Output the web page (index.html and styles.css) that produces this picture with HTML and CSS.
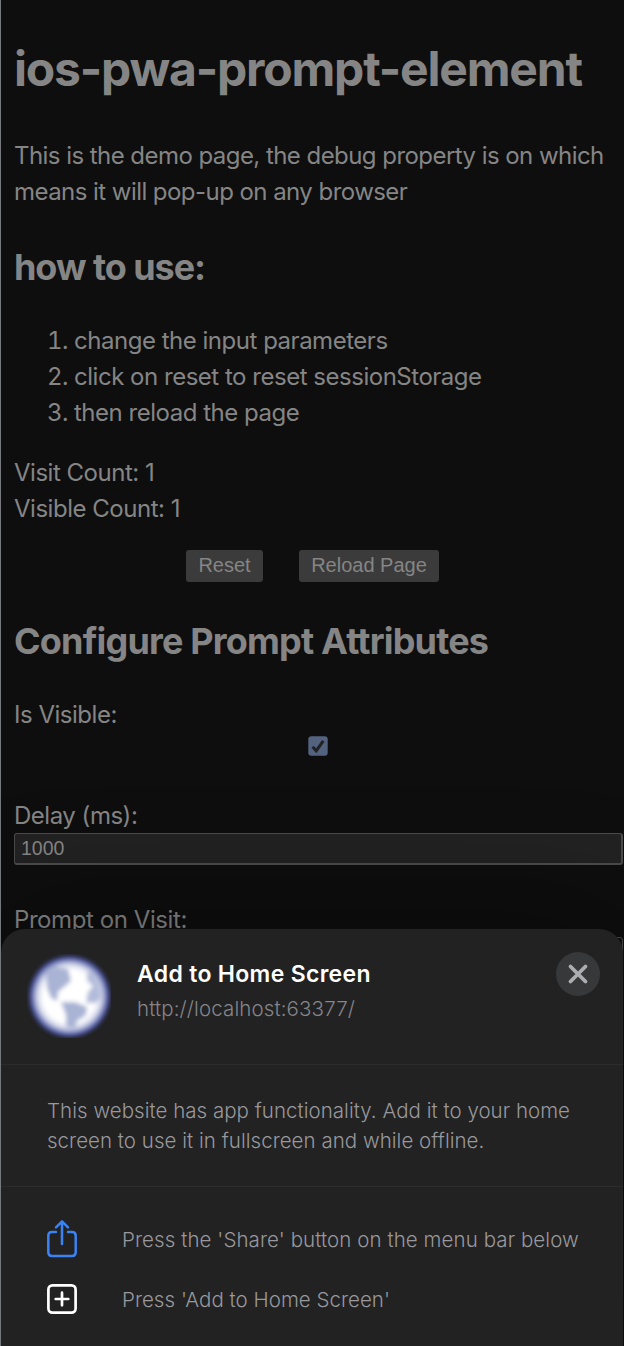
FILE: index.html
```html
<!DOCTYPE html>
<html lang="en">
<head>
<meta charset="utf-8">
<title>ios-pwa-prompt-element</title>
<link rel="stylesheet" href="styles.css">
</head>
<body>
<main class="page">
  <h1 class="title">ios-pwa-prompt-element</h1>
  <p class="intro">This is the demo page, the debug property is on which<br>means it will pop-up on any browser</p>
  <h2 class="heading how">how to use:</h2>
  <ol class="steps">
    <li>change the input parameters</li>
    <li>click on reset to reset sessionStorage</li>
    <li>then reload the page</li>
  </ol>
  <div class="counts">Visit Count: 1<br>Visible Count: 1</div>
  <div class="buttons"><button class="btn reset">Reset</button><button class="btn reload">Reload Page</button></div>
  <h2 class="heading configure">Configure Prompt Attributes</h2>
  <label class="label">Is Visible:</label>
  <div class="check-row"><svg class="check" width="20" height="20" viewBox="0 0 20 20"><rect x=".3" y=".3" width="19.4" height="19.4" rx="3" fill="#53637f"/><path d="M4.6 10.8 8.2 14.8 15.3 4.8" fill="none" stroke="#202224" stroke-width="3"/></svg></div>
  <label class="label delay">Delay (ms):</label>
  <div class="input">1000</div>
  <label class="label visit">Prompt on Visit:</label>
</main>
<div class="next-input"></div>
<section class="sheet">
  <header class="sheet-head">
    <svg class="globe" width="84" height="84" viewBox="0 0 84 84">
      <defs>
        <filter id="soft" x="-10%" y="-10%" width="120%" height="120%"><feGaussianBlur stdDeviation="2.1"/></filter>
        <radialGradient id="sea"><stop offset=".66" stop-color="#fff"/><stop offset=".8" stop-color="#cfd4e8"/><stop offset=".88" stop-color="#7d87be"/><stop offset=".95" stop-color="#4650a0"/><stop offset="1" stop-color="#3c4591"/></radialGradient>
      </defs>
      <g filter="url(#soft)">
        <circle cx="42.5" cy="42.5" r="40.5" fill="url(#sea)"/>
        <path d="M19 19 27 13 41 15 44 27 37 33 31 38 30 47 24 44 20 34Z" fill="#a9b3d4"/>
        <path d="M34 48H48L60 53 59 61 50 67 48 74 39 73 39 61Z" fill="#a9b3d4"/>
        <path d="M60 18 66 19 72 31 74 43 69 49 59 49 61 38 66 32 60 27Z" fill="#b3bcda"/>
      </g>
    </svg>
    <div class="app">
      <div class="app-name">Add to Home Screen</div>
      <div class="app-url">http://localhost:63377/</div>
    </div>
    <svg class="close" width="44" height="44" viewBox="0 0 44 44"><circle cx="22" cy="22" r="22" fill="#37383a"/><path d="M14.5 14.5 29.5 29.5M29.5 14.5 14.5 29.5" stroke="#acadb0" stroke-width="3.8" stroke-linecap="round"/></svg>
  </header>
  <div class="description">This website has app functionality. Add it to your home<br>screen to use it in fullscreen and while offline.</div>
  <div class="actions">
    <div class="action">
      <svg class="action-icon" width="32" height="40" viewBox="0 0 32 40" fill="none" stroke="#3b82f5" stroke-width="2.5" stroke-linecap="round" stroke-linejoin="round"><path d="M10 13H6Q2.3 13 2.3 16.7V33.2Q2.3 36.9 6 36.9H26Q29.7 36.9 29.7 33.2V16.7Q29.7 13 26 13H22"/><path d="M16 25V2.5M10 8.3 16 2.3 22 8.3"/></svg>
      <span class="share-text">Press the 'Share' button on the menu bar below</span>
    </div>
    <div class="action">
      <svg class="action-icon" width="32" height="32" viewBox="0 0 32 32" fill="none" stroke="#fff" stroke-width="2.7" stroke-linecap="round"><rect x="2.4" y="2.4" width="27.2" height="27.2" rx="4"/><path d="M9.7 16H22.3M16 9.7V22.3"/></svg>
      <span class="add-text">Press 'Add to Home Screen'</span>
    </div>
  </div>
</section>
</body>
</html>
```
FILE: styles.css
```css
* { box-sizing: border-box; }
html, body { margin: 0; height: 1346px; overflow: hidden; }
body {
  position: relative;
  background: #0e0e0e;
  border-left: 1px solid #77787b;
  color: #858585;
  font: 24px/36px Inter, "Liberation Sans", sans-serif;
  letter-spacing: -.48px;
  white-space: nowrap;
}
.page { display: flex; flex-direction: column; padding: 42px 1px 0 13px; }
.title { margin: 0 0 43px; font-size: 48px; line-height: 53px; font-weight: 700; letter-spacing: -1.18px; }
.intro { margin: 0 0 37px; letter-spacing: -.55px; }
.heading { margin: 0; font-size: 36px; line-height: 40px; font-weight: 700; }
.how { margin-bottom: 36px; letter-spacing: -1.05px; }
.steps { margin: 0 0 24px; padding-left: 60px; }
.buttons { display: flex; gap: 36px; margin: 23px 0 39px 172px; }
.btn {
  height: 32px;
  padding: 0 0 2px;
  border: 0;
  border-radius: 3px;
  background: #3b3b3b;
  color: #858585;
  font: 20px/30px "Liberation Sans", sans-serif;
  letter-spacing: 0;
}
.reset { width: 77px; }
.reload { width: 140px; }
.configure { margin-bottom: 36px; letter-spacing: -.81px; }
.check-row { display: flex; height: 32px; margin-left: 294px; padding-top: 3px; }
.delay { margin-top: 33px; }
.input {
  height: 32px;
  margin-top: -1px;
  padding: 0 6px;
  border: 1px solid #4b4b4b;
  border-width: 1px 2px 2px 1px;
  border-radius: 3px;
  background: #222;
  font: 19.5px/29px "Liberation Sans", sans-serif;
  letter-spacing: 0;
}
.visit { margin-top: 37px; letter-spacing: -.42px; }
.next-input { position: absolute; left: 13px; right: 1px; top: 937px; height: 32px; border: 1px solid #4b4b4b; border-radius: 3px; }
.sheet {
  position: absolute;
  left: 0;
  right: 1px;
  top: 929px;
  height: 417px;
  border-radius: 24px 24px 0 0;
  background: #222;
  color: #98989d;
  font-size: 20.5px;
  line-height: 30px;
  font-weight: 300;
  letter-spacing: .03px;
  box-shadow: 0 0 130px rgba(0,0,0,.38);
}
.sheet-head { display: flex; height: 136px; border-bottom: 1px solid #2c2c2c; }
.globe { margin: 25px 0 0 26px; }
.app { flex: 1; padding: 28px 0 0 26px; }
.app-name { color: #fff; font-size: 23px; line-height: 34px; font-weight: 600; letter-spacing: .32px; }
.app-url { margin-top: 3px; color: #85858b; letter-spacing: .12px; }
.close { margin: 23px 23px 0 0; }
.description { height: 122px; padding: 31px 46px 0; border-bottom: 1px solid #2c2c2c; }
.actions { display: flex; flex-direction: column; padding: 23px 45px 0; }
.action { display: flex; align-items: center; height: 60px; gap: 44px; }
.action-icon { flex: none; margin-bottom: 2px; }
.share-text { letter-spacing: .08px; }
```
